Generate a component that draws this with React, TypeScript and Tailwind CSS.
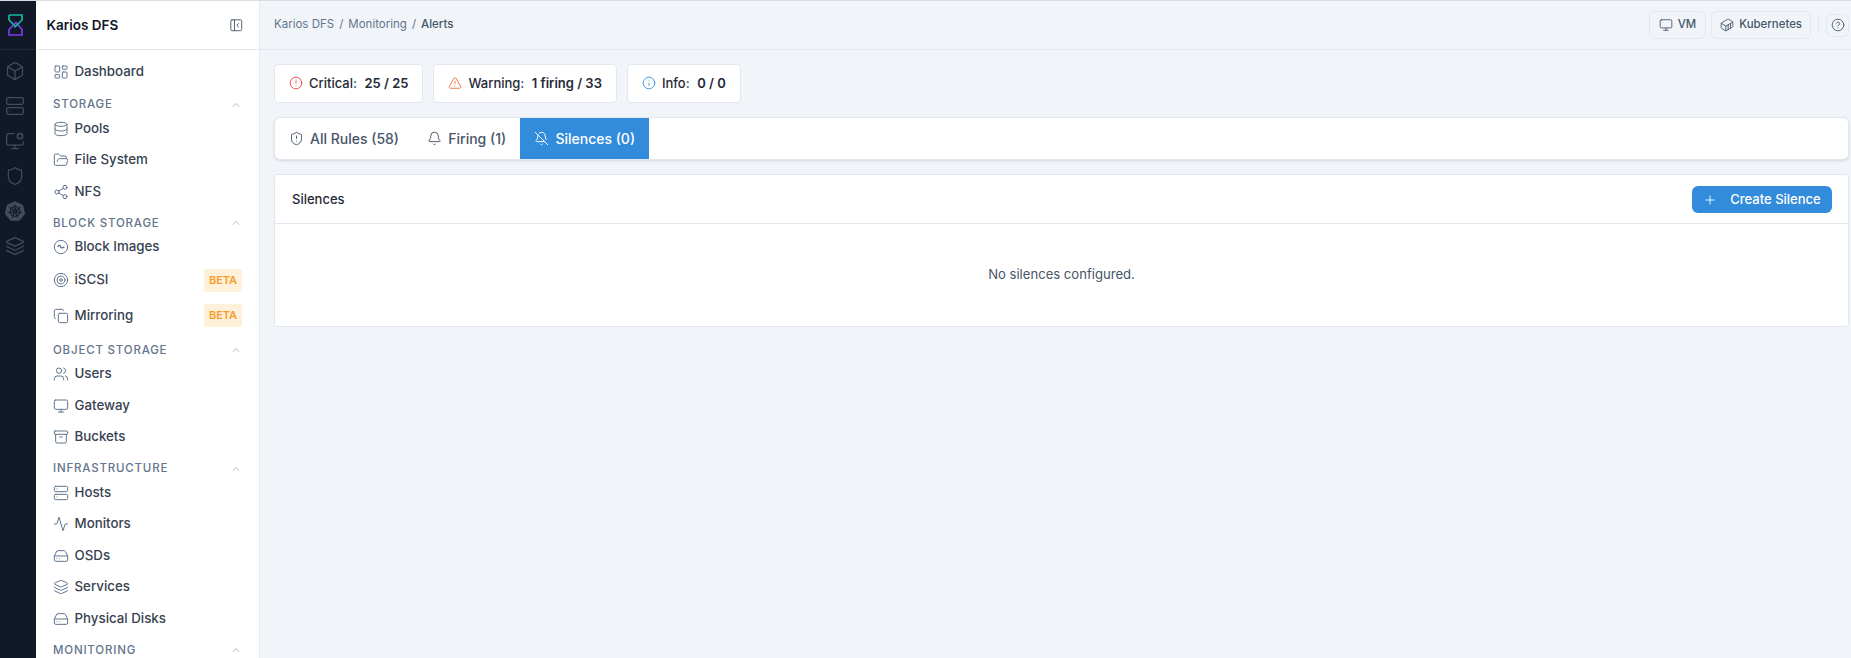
import type { ReactNode } from 'react';
import {
  Activity, Archive, Bell, BellOff, Box, ChevronUp, CircleAlert, CircleHelp, Container, Copy, Database, FolderOpen,
  HardDrive, Info, Layers, LayoutDashboard, Monitor, MonitorCog, PanelLeftClose, Plus, Server, Share2, Shield,
  ShieldAlert, Target, TriangleAlert, Users,
} from 'lucide-react';
import { SiKubernetes } from 'react-icons/si';

const iconCls = 'w-4 h-4 text-slate-500 shrink-0';

function NavItem({ icon, label, beta }: { icon: ReactNode; label: string; beta?: boolean }) {
  return (
    <div className={`flex items-center gap-[6px] pl-[16.5px] pr-[17px] ${beta ? 'h-[35.25px]' : 'h-[31.5px]'}`}>
      {icon}
      <span className="text-[13.3px] font-medium text-[#374151]">{label}</span>
      {beta && (
        <span className="ml-auto h-[23px] w-[38px] rounded-[3px] bg-[#fef0d9] text-[#f59e2e] text-[11px] font-semibold flex items-center justify-center">
          BETA
        </span>
      )}
    </div>
  );
}

function Section({ title, tight, children }: { title: string; tight?: boolean; children: ReactNode }) {
  return (
    <div className={tight ? 'mt-[8px]' : 'mt-[9px]'}>
      <div className="flex items-center justify-between h-4 pl-[17px] pr-[17px]">
        <span className="text-[11.5px] font-medium tracking-[0.07em] text-[#64748b]">{title}</span>
        <ChevronUp className="w-3 h-3 text-slate-400" strokeWidth={1.5} />
      </div>
      {children}
    </div>
  );
}

function Stat({ icon, label, value }: { icon: ReactNode; label: string; value: string }) {
  return (
    <div className="h-[38.5px] flex items-center gap-[6px] pl-[14px] pr-[14px] bg-white border border-[#e2e8f0] rounded-[4px] text-[13px] text-[#1f2937]">
      {icon}
      <span className="font-medium">{label}</span>
      <span className="font-semibold ml-[1.5px]">{value}</span>
    </div>
  );
}

function BlockImageIcon() {
  return (
    <svg className={iconCls} viewBox="0 0 24 24" fill="none" stroke="currentColor" strokeWidth="1.5" strokeLinecap="round" strokeLinejoin="round">
      <circle cx="12" cy="12" r="10" />
      <path d="M7.5 11.5c.5-2 2-2.5 3-1.500s.8 2.500 2 3c1.500.6 3 .2 4-1" strokeWidth="2" />
    </svg>
  );
}

export default function App() {
  const railIcon = 'w-5 h-5 text-[#414d60]';
  return (
    <div className="h-[658px] w-[1851px] overflow-hidden flex bg-[#f1f5f9] border-t border-[#d9dce3] font-['Inter',sans-serif]">
      <div className="w-[36px] shrink-0 bg-[#111827] flex flex-col">
        <div className="h-[49px] flex items-center justify-center pr-[6px] border-b border-[#1f2937]">
          <svg width="15" height="22" viewBox="0 0 15 22" fill="none" strokeWidth="1.7">
            <path d="M1 21H14V15.500L8 8.500L1 15.500V21Z" stroke="#7c3aed" />
            <path d="M1 1H14V6L6.500 13.500M1 1V6L7.500 12.500" stroke="#14b8a6" />
          </svg>
        </div>
        <div className="flex flex-col items-center gap-[15px] pt-[11px] pr-[6px]">
          <Box className={railIcon} strokeWidth={1.5} />
          <Server className={railIcon} strokeWidth={1.5} />
          <MonitorCog className={railIcon} strokeWidth={1.5} />
          <Shield className={railIcon} strokeWidth={1.5} />
          <SiKubernetes className={railIcon} />
          <Layers className={railIcon} strokeWidth={1.5} />
        </div>
      </div>

      <aside className="w-[224px] shrink-0 bg-white border-r border-[#e2e8f0]">
        <div className="h-[49px] border-b border-[#e2e8f0] flex items-center justify-between pl-[10.5px] pr-[16px]">
          <span className="text-[13.5px] font-semibold text-[#111827]">Karios DFS</span>
          <PanelLeftClose className="w-[14.5px] h-[14.5px] text-[#475569]" strokeWidth={1.5} />
        </div>
        <nav className="pt-[6.25px]">
          <NavItem icon={<LayoutDashboard className={iconCls} strokeWidth={1.5} />} label="Dashboard" />
          <Section title="STORAGE">
            <NavItem icon={<Database className={iconCls} strokeWidth={1.5} />} label="Pools" />
            <NavItem icon={<FolderOpen className={iconCls} strokeWidth={1.5} />} label="File System" />
            <NavItem icon={<Share2 className={iconCls} strokeWidth={1.5} />} label="NFS" />
          </Section>
          <Section title="BLOCK STORAGE" tight>
            <NavItem icon={<BlockImageIcon />} label="Block Images" />
            <NavItem icon={<Target className={iconCls} strokeWidth={1.5} />} label="iSCSI" beta />
            <NavItem icon={<Copy className={iconCls} strokeWidth={1.5} />} label="Mirroring" beta />
          </Section>
          <Section title="OBJECT STORAGE">
            <NavItem icon={<Users className={iconCls} strokeWidth={1.5} />} label="Users" />
            <NavItem icon={<Monitor className={iconCls} strokeWidth={1.5} />} label="Gateway" />
            <NavItem icon={<Archive className={iconCls} strokeWidth={1.5} />} label="Buckets" />
          </Section>
          <Section title="INFRASTRUCTURE" tight>
            <NavItem icon={<Server className={iconCls} strokeWidth={1.5} />} label="Hosts" />
            <NavItem icon={<Activity className={iconCls} strokeWidth={1.5} />} label="Monitors" />
            <NavItem icon={<HardDrive className={iconCls} strokeWidth={1.5} />} label="OSDs" />
            <NavItem icon={<Layers className={iconCls} strokeWidth={1.5} />} label="Services" />
            <NavItem icon={<HardDrive className={iconCls} strokeWidth={1.5} />} label="Physical Disks" />
          </Section>
          <Section title="MONITORING" tight>
            <div />
          </Section>
        </nav>
      </aside>

      <main className="flex-1 min-w-0">
        <header className="h-[49px] border-b border-[#e2e8f0] flex items-center justify-between pl-[14px] pr-[2px]">
          <div className="flex items-center gap-[5px] text-[11.5px] text-[#64748b]">
            <span>Karios DFS</span>
            <span>/</span>
            <span>Monitoring</span>
            <span>/</span>
            <span className="font-medium text-[#475569]">Alerts</span>
          </div>
          <div className="flex items-center">
            <div className="h-[27.5px] px-[9px] flex items-center gap-[5px] border border-[#e2e8f0] rounded-[6px] text-[11.4px] font-medium text-[#475569]">
              <Monitor className="w-[14px] h-[14px]" strokeWidth={1.5} />
              VM
            </div>
            <div className="ml-[5px] h-[27.5px] px-[8px] flex items-center gap-[5px] border border-[#e2e8f0] rounded-[6px] text-[11.4px] font-medium text-[#475569]">
              <Container className="w-[14px] h-[14px]" strokeWidth={1.5} />
              Kubernetes
            </div>
            <div className="mx-[7px] w-px h-[18px] bg-[#e2e8f0]" />
            <div className="h-[23px] w-[23px] flex items-center justify-center border border-[#e2e8f0] rounded-[6px] text-[#475569]">
              <CircleHelp className="w-[14px] h-[14px]" strokeWidth={1.5} />
            </div>
          </div>
        </header>

        <div className="pt-[14px] pl-[14px] pr-[2px]">
          <div className="flex gap-[10px]">
            <Stat icon={<CircleAlert className="w-[14px] h-[14px] text-[#ef4444]" strokeWidth={1.5} />} label="Critical:" value="25 / 25" />
            <Stat icon={<TriangleAlert className="w-[14px] h-[14px] text-[#ea6c2e]" strokeWidth={1.5} />} label="Warning:" value="1 firing / 33" />
            <Stat icon={<Info className="w-[14px] h-[14px] text-[#3b8edb]" strokeWidth={1.5} />} label="Info:" value="0 / 0" />
          </div>

          <div className="mt-[14.5px] h-[43px] bg-white border border-[#e2e8f0] rounded-[6px] shadow-sm flex overflow-hidden text-[14px] font-medium text-[#475569]">
            <div className="flex items-center gap-[6px] pl-[14px] pr-[14px]">
              <ShieldAlert className="w-[15px] h-[15px]" strokeWidth={1.5} />
              All Rules (58)
            </div>
            <div className="flex items-center gap-[6px] px-[14.25px]">
              <Bell className="w-[15px] h-[15px]" strokeWidth={1.5} />
              Firing (1)
            </div>
            <div className="flex items-center gap-[6px] px-[14px] bg-[#338cdb] text-white">
              <BellOff className="w-[15px] h-[15px]" strokeWidth={1.5} />
              Silences (0)
            </div>
          </div>

          <section className="mt-[14px] bg-white border border-[#e2e8f0] rounded-[3px]">
            <div className="h-[49px] pt-[1px] border-b border-[#e2e8f0] flex items-center justify-between pl-[17px] pr-[16px]">
              <span className="text-[13px] font-medium text-[#1f2937]">Silences</span>
              <button className="h-[27px] w-[140px] flex items-center justify-center gap-[13px] rounded-[6px] bg-[#338cdb] text-white text-[13px] font-medium">
                <Plus className="w-[14px] h-[14px]" strokeWidth={1.5} />
                Create Silence
              </button>
            </div>
            <div className="h-[101.5px] pt-[1px] flex items-center justify-center text-[13.1px] text-[#475569]">
              No silences configured.
            </div>
          </section>
        </div>
      </main>
    </div>
  );
}
